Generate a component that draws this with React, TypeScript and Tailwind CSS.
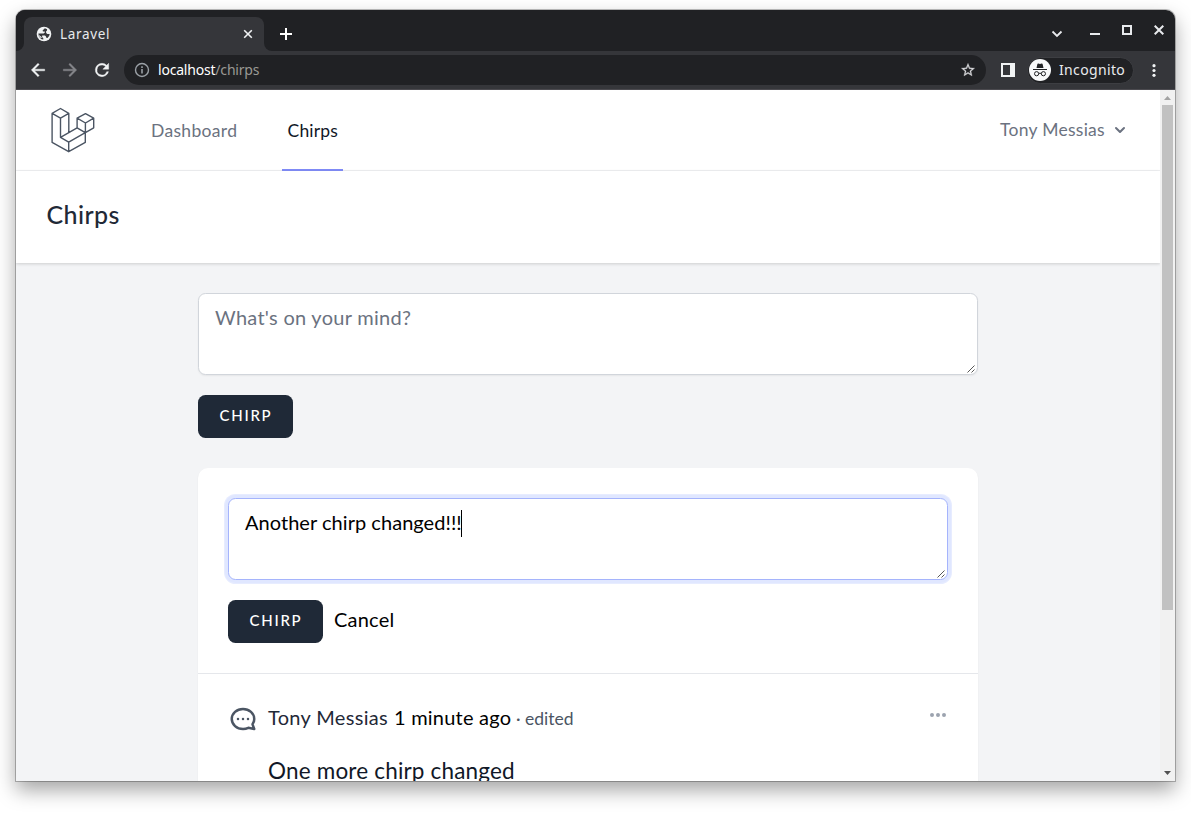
import React from "react";

type TextBoxProps = { focused?: boolean; children: React.ReactNode };

function LaravelLogo() {
  return (
    <svg className="h-[46px] w-[46px] shrink-0" viewBox="0 0 46 46" fill="none" stroke="#4b5563" strokeWidth="1.4" strokeLinejoin="round">
      <path d="M10.5 1.5 18.8 6.3l-8.3 4.8L2.1 6.3zM2.1 6.3v29.1l16.6 9.3L35.3 35.4V25.6M10.5 11.1v19.3l8.2 4.7v9.6M18.8 6.3v19.2M10.5 30.4l16.6-9.6 8.2 4.9-16.6 9.4M35.5 6.6l8.2 4.6-8.2 4.8-8.4-4.8zM27.1 11.2v9.6M35.4 16v9.7l8.3-4.9v-9.6" />
    </svg>
  );
}

function TextBox({ focused, children }: TextBoxProps) {
  return (
    <div
      className={
        focused
          ? "flex h-[82px] items-end justify-between rounded-[7.5px] border border-[#a5b4fc] bg-white shadow-[0_0_0_3px_#e0e7ff,0_0_0_4px_#e7ecff]"
          : "flex h-[82px] items-end justify-between rounded-[7.5px] border border-[#d1d5db] bg-white shadow-[0_1px_2px_rgba(0,0,0,0.06)]"
      }
    >
      <div className="flex h-[80px] pt-[8px] pl-4 text-[20px] leading-[30px]">{children}</div>
      <svg className="mr-[2px] mb-[1px] h-2 w-2" viewBox="0 0 8 8" stroke="#444" strokeWidth="0.9" fill="none">
        <path d="M0.5 7.5l7-7M4.5 7.5l3-3" />
      </svg>
    </div>
  );
}

function ChirpButton() {
  return (
    <button className="flex h-[43px] w-[95px] items-center justify-center rounded-[7.5px] bg-[#1f2937] pb-[3px] pl-px text-[15px] leading-5 font-medium tracking-[1.7px] text-white">
      CHIRP
    </button>
  );
}

function TabStrip() {
  return (
    <div className="flex h-[41px] bg-[#202124] text-white">
      <div className="flex w-2 items-end bg-[#35363a]">
        <div className="h-full w-2 rounded-br-[8px] bg-[#202124]" />
      </div>
      <div className="flex w-[240px] items-end bg-[#202124]">
        <div className="flex h-[34px] w-[240px] items-center rounded-t-[8px] bg-[#35363a] pr-[11px] pl-3">
          <svg className="h-4 w-4" viewBox="0 0 16 16">
            <circle cx="8" cy="8" r="7.3" fill="#f1f3f4" />
            <path d="M8.9 2.3 6.8 4.2q-.5.8.3 1.2h1.5q.5.3.2 1L7.6 7.6H2.4q-.2 2.4 1.7 4.4 1.5 1.5 3.2 1.6v-1.3L6.1 11l.1-1.6h2.6q1.1.2 1.2 1.3l.3 1 1.2.2q2-1.3 2.2-3.8l-2.4-.1-1.1-1.1-.2-1.5 1-.8.1-1.4z" fill="#35363a" />
            <path d="M2.2 8.4 5.6 11l.1 1L4 11.6z" fill="#f1f3f4" />
          </svg>
          <span className="ml-2 text-[13.5px] leading-5 tracking-[0.65px] text-[#e8eaed]">Laravel</span>
          <svg className="ml-auto h-[10px] w-[10px]" viewBox="0 0 10 10" stroke="#f1f3f4" strokeWidth="1.6">
            <path d="M1.2 1.2l7.6 7.6M8.8 1.2 1.2 8.8" />
          </svg>
        </div>
      </div>
      <div className="flex w-2 bg-[#35363a]">
        <div className="h-full w-2 rounded-bl-[8px] bg-[#202124]" />
      </div>
      <svg className="mt-[18px] ml-2 h-3 w-3" viewBox="0 0 12 12" stroke="#fff" strokeWidth="2">
        <path d="M6 0v12M0 6h12" />
      </svg>
      <div className="ml-auto flex pr-[11px]">
        <svg className="mt-[20px] mr-[27px] h-[8px] w-[12px]" viewBox="0 0 12 8" fill="none" stroke="#e8eaed" strokeWidth="1.8">
          <path d="M1.5 1.5 6 6l4.5-4.5" />
        </svg>
        <div className="mt-[23px] mr-[22px] h-[2px] w-[10px] bg-[#e8eaed]" />
        <div className="mt-[15px] mr-[22px] h-[10px] w-[10px] border-2 border-[#e8eaed]" />
        <svg className="mt-[15px] h-[10px] w-[10px]" viewBox="0 0 10 10" stroke="#e8eaed" strokeWidth="2">
          <path d="M.7.7l8.6 8.6M9.3.7.7 9.3" />
        </svg>
      </div>
    </div>
  );
}

function Toolbar() {
  return (
    <div className="flex h-[39px] items-center border-b border-[#4b4a4f] bg-[#35363a] pl-3">
      <svg className="h-5 w-5" viewBox="0 0 24 24" fill="#f1f3f4">
        <path d="M20 11H7.83l5.59-5.59L12 4l-8 8 8 8 1.41-1.41L7.83 13H20z" stroke="#f1f3f4" strokeWidth=".5" />
      </svg>
      <svg className="ml-3 h-5 w-5" viewBox="0 0 24 24" fill="#85868a">
        <path d="m12 4-1.41 1.41L16.17 11H4v2h12.17l-5.58 5.59L12 20l8-8z" stroke="#85868a" strokeWidth=".5" />
      </svg>
      <svg className="ml-3 h-5 w-5" viewBox="0 0 24 24" fill="#f1f3f4">
        <path d="M17.65 6.35A7.96 7.96 0 0 0 12 4a8 8 0 1 0 7.73 10h-2.08A6 6 0 1 1 12 6c1.66 0 3.14.69 4.22 1.78L13 11h7V4z" stroke="#f1f3f4" strokeWidth=".5" />
      </svg>
      <div className="ml-3 flex h-[30px] w-[862px] items-center rounded-full bg-[#202124] pr-[10px] pl-[10px]">
        <svg className="h-4 w-4" viewBox="0 0 16 16" fill="none" stroke="#9aa0a6" strokeWidth="1.4">
          <circle cx="8" cy="8" r="6.5" />
          <path d="M8 7v4.5M8 4.3v1.6" strokeWidth="1.6" />
        </svg>
        <span className="ml-2 text-[14px] leading-5 tracking-[-0.2px] text-white">
          localhost<span className="text-[#9a9994]">/chirps</span>
        </span>
        <svg className="ml-auto h-4 w-4" viewBox="0 0 24 24" fill="#d5d6d9">
          <path d="m22 9.24-7.19-.62L12 2 9.19 8.63 2 9.24l5.46 4.73L5.82 21 12 17.27 18.18 21l-1.63-7.03zM12 15.4l-3.76 2.27 1-4.28-3.32-2.88 4.38-.38L12 6.1l1.71 4.04 4.38.38-3.32 2.88 1 4.28z" stroke="#d5d6d9" strokeWidth=".4" />
        </svg>
      </div>
      <div className="ml-[15px] flex h-[14px] w-[14px] border-2 border-r-[5px] border-[#f1f3f4]" />
      <div className="ml-3 flex h-[27px] w-[107px] items-center rounded-full border border-[#3d3e42] bg-[#202124]">
        <svg className="ml-[1px] h-[22px] w-[22px]" viewBox="0 0 22 22">
          <circle cx="11" cy="11" r="11" fill="#f8f9fa" />
          <path d="M7.5 8.9 8.4 5q.2-.7.9-.5l1.7.4 1.7-.4q.7-.2.9.5l.9 3.9z" fill="#202124" />
          <path d="M4 10.5h14" stroke="#202124" strokeWidth="1" />
          <circle cx="7.6" cy="14.7" r="2.1" stroke="#202124" strokeWidth="1" fill="none" />
          <circle cx="14.4" cy="14.7" r="2.1" stroke="#202124" strokeWidth="1" fill="none" />
          <path d="M9.8 14.5q1.2-.7 2.4 0" stroke="#202124" strokeWidth="1" fill="none" />
        </svg>
        <span className="ml-[8px] text-[14px] leading-5 tracking-[0.35px] text-[#e8eaed]">Incognito</span>
      </div>
      <svg className="ml-[17.5px] h-[13px] w-1" viewBox="0 0 4 13" fill="#f1f3f4">
        <circle cx="2" cy="1.7" r="1.6" />
        <circle cx="2" cy="6.5" r="1.6" />
        <circle cx="2" cy="11.3" r="1.6" />
      </svg>
    </div>
  );
}

function Navigation() {
  return (
    <nav className="flex h-[81px] shrink-0 items-stretch border-b border-[#f0f1f3] bg-white pr-[30px] pl-[34px] text-[17.5px] leading-[25px]">
      <div className="mt-[17px]">
        <LaravelLogo />
      </div>
      <a className="mt-[28px] ml-[55px] w-[131px] tracking-[0.32px] text-[#6b7280]">Dashboard</a>
      <a className="-mb-px w-[61px] border-b-2 border-[#818cf8] pt-[28px] pl-[5.5px] tracking-[0.2px] text-[#111827]">Chirps</a>
      <div className="mt-[27px] ml-auto flex h-[25px] items-center text-[#6b7280]">
        <span className="w-[110px] tracking-[0.28px] whitespace-nowrap">Tony Messias</span>
        <svg className="h-5 w-5" viewBox="0 0 20 20" fill="currentColor">
          <path d="M5.293 7.293a1 1 0 011.414 0L10 10.586l3.293-3.293a1 1 0 111.414 1.414l-4 4a1 1 0 01-1.414 0l-4-4a1 1 0 010-1.414z" />
        </svg>
      </div>
    </nav>
  );
}

function ChirpCard() {
  return (
    <section className="mt-[30px] flex h-[420px] flex-col rounded-[10px] bg-white shadow-[0_1px_2px_rgba(0,0,0,0.06)]">
      <div className="h-[206px] border-b border-[#e5e7eb] p-[30px]">
        <TextBox focused>
          <span className="tracking-[0.04px] text-black">Another chirp changed!!!</span>
          <span className="mt-[3px] -ml-px h-[27px] w-px bg-black" />
        </TextBox>
        <div className="mt-5 flex items-center">
          <ChirpButton />
          <span className="ml-[11px] pb-[5px] text-[20px] leading-[30px] tracking-[0.2px] text-black">Cancel</span>
        </div>
      </div>
      <article className="flex px-[30px] pt-[30px]">
        <svg className="h-[30px] w-[30px] -scale-x-100" viewBox="0 0 24 24" fill="none" stroke="#4b5563" strokeWidth="2" strokeLinecap="round" strokeLinejoin="round">
          <path d="M8 12h.01M12 12h.01M16 12h.01M21 12c0 4.418-4.03 8-9 8a9.863 9.863 0 01-4.255-.949L3 20l1.395-3.72C3.512 15.042 3 13.574 3 12c0-4.418 4.03-8 9-8s9 3.582 9 8z" />
        </svg>
        <div className="ml-[10px] flex-1">
          <div className="flex h-[30px] items-center text-[20px] leading-[30px] whitespace-nowrap">
            <span className="w-[126px] pb-[5px] tracking-[0.33px] text-[#1f2937]">Tony Messias</span>
            <span className="w-[122px] pb-[5px] tracking-[0.22px] text-black">1 minute ago</span>
            <span className="pb-[2px] text-[17.5px] leading-[25px] text-[#4b5563]">· edited</span>
          </div>
          <p className="mt-[19px] text-[22.5px] leading-[35px] tracking-[0.18px] text-[#111827]">One more chirp changed</p>
        </div>
        <svg className="mt-px h-5 w-5" viewBox="0 0 20 20" fill="#9ca3af">
          <path d="M6 10a2 2 0 11-4 0 2 2 0 014 0zM12 10a2 2 0 11-4 0 2 2 0 014 0zM16 12a2 2 0 100-4 2 2 0 000 4z" />
        </svg>
      </article>
    </section>
  );
}

function ScrollBar() {
  return (
    <div className="flex w-[15px] shrink-0 flex-col bg-[#f1f1f1] px-[2px]">
      <svg className="mt-[6px] ml-[2px] h-1 w-[7px] shrink-0" viewBox="0 0 7 4" fill="#a3a3a3">
        <path d="M0 4 3.5 0 7 4z" />
      </svg>
      <div className="mt-[5px] h-[505px] w-[11px] bg-[#c1c1c1]" />
      <svg className="mt-auto mb-[6px] ml-[2px] h-1 w-[7px] shrink-0" viewBox="0 0 7 4" fill="#505050">
        <path d="M0 0 3.5 4 7 0z" />
      </svg>
    </div>
  );
}

export default function App() {
  return (
    <div className="h-[813px] w-[1191px] overflow-hidden bg-white pt-[10px] pl-4">
      <div className="flex h-[771px] w-[1159px] flex-col overflow-hidden rounded-t-[9px] shadow-[0_0_0_1px_rgba(0,0,0,0.25),0_9px_20px_rgba(0,0,0,0.36)]">
        <div className="shrink-0 font-['Noto_Sans',sans-serif]">
          <TabStrip />
          <Toolbar />
        </div>
        <div className="flex min-h-0 flex-1 font-[Lato,sans-serif]">
          <main className="flex min-w-0 flex-1 flex-col overflow-hidden bg-[#f3f4f6]">
            <Navigation />
            <header className="z-10 flex h-[92px] shrink-0 items-center bg-white pl-[30.5px] shadow-[0_1px_3px_rgba(0,0,0,0.16)]">
              <h1 className="pb-[5px] text-[25px] leading-[31px] font-medium tracking-[0.4px] text-[#1f2937]">Chirps</h1>
            </header>
            <div className="ml-[182px] w-[780px] pt-[30px]">
              <TextBox>
                <span className="tracking-[0.28px] text-[#6b7280]">What's on your mind?</span>
              </TextBox>
              <div className="mt-5">
                <ChirpButton />
              </div>
              <ChirpCard />
            </div>
          </main>
          <ScrollBar />
        </div>
      </div>
    </div>
  );
}
